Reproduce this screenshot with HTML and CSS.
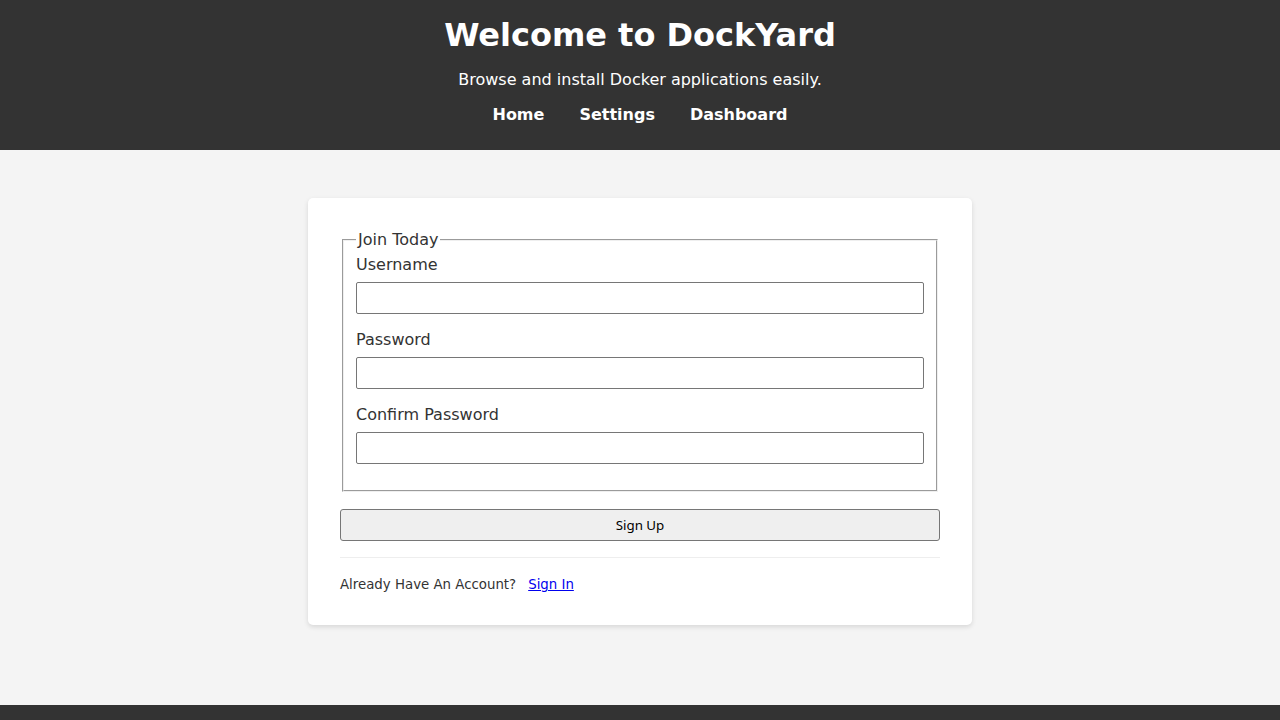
FILE: index.html
```html
<!DOCTYPE html>
<html lang="en">
<head>
<meta charset="utf-8">
<title>DockYard - Sign Up</title>
<link rel="stylesheet" href="styles.css">
</head>
<body>
<header class="site-header">
  <h1 class="site-title">Welcome to DockYard</h1>
  <p class="site-tagline">Browse and install Docker applications easily.</p>
  <nav class="site-nav">
    <a href="#" class="nav-link">Home</a>
    <a href="#" class="nav-link">Settings</a>
    <a href="#" class="nav-link">Dashboard</a>
  </nav>
</header>
<main class="main">
  <div class="card">
    <form class="form">
      <fieldset class="fieldset">
        <legend class="legend">Join Today</legend>
        <div class="group">
          <label class="label" for="username">Username</label>
          <input class="input" id="username" type="text">
        </div>
        <div class="group">
          <label class="label" for="password">Password</label>
          <input class="input" id="password" type="password">
        </div>
        <div class="group">
          <label class="label" for="confirm">Confirm Password</label>
          <input class="input" id="confirm" type="password">
        </div>
      </fieldset>
      <button class="btn" type="submit">Sign Up</button>
    </form>
    <div class="account">
      <span>Already Have An Account?</span><a href="#" class="signin">Sign In</a>
    </div>
  </div>
</main>
<footer class="site-footer"></footer>
</body>
</html>
```
FILE: styles.css
```css
* { box-sizing: border-box; }
html, body { margin: 0; padding: 0; }
body {
  font-family: "DejaVu Sans", sans-serif;
  background: #f4f4f4;
  color: #333;
}
.site-header {
  background: #333;
  color: #fff;
  text-align: center;
  height: 150px;
  padding-top: 17px;
}
.site-title {
  margin: 0;
  font-size: 32px;
  line-height: 37px;
  font-weight: bold;
}
.site-tagline {
  margin: 16px 0 0;
  font-size: 16px;
  line-height: 19px;
}
.site-nav {
  margin-top: 16px;
  display: flex;
  justify-content: center;
  gap: 35px;
}
.nav-link {
  color: #fff;
  text-decoration: none;
  font-weight: bold;
  font-size: 16px;
  line-height: 19px;
}
.main {
  height: 555px;
  padding-top: 48px;
  display: flex;
  justify-content: center;
  align-items: flex-start;
}
.card {
  width: 664px;
  background: #fff;
  border-radius: 5px;
  box-shadow: 0 2px 5px rgba(0,0,0,0.12);
  padding: 32px;
}
.form { margin: 0; }
.fieldset {
  margin: 0 2px 17px;
  padding: 6px 12px 10px;
  border: 2px groove ThreeDFace;
  min-width: 0;
}
.legend {
  font-size: 16px;
  line-height: 19px;
  padding: 0 2px;
  color: #333;
}
.group { margin-bottom: 16px; }
.label {
  display: block;
  font-size: 16px;
  line-height: 19px;
  margin-bottom: 8px;
  color: #333;
}
.input {
  display: block;
  width: 100%;
  height: 32px;
  border: 1px solid #767676;
  border-radius: 2px;
  padding: 4px 8px;
  font-family: "DejaVu Sans", sans-serif;
  font-size: 14px;
  background: #fff;
}
.btn {
  display: block;
  width: 100%;
  height: 32px;
  background: #efefef;
  border: 1px solid #767676;
  border-radius: 3px;
  font-family: "Noto Sans", sans-serif;
  font-size: 13.333px;
  color: #000;
  padding: 0;
}
.account {
  margin-top: 16px;
  border-top: 1px solid #eee;
  padding-top: 19px;
  font-size: 13.333px;
  line-height: 16px;
  color: #333;
}
.signin {
  margin-left: 12px;
  color: #0000ee;
  text-decoration: underline;
}
.site-footer {
  background: #333;
  height: 40px;
}
```
